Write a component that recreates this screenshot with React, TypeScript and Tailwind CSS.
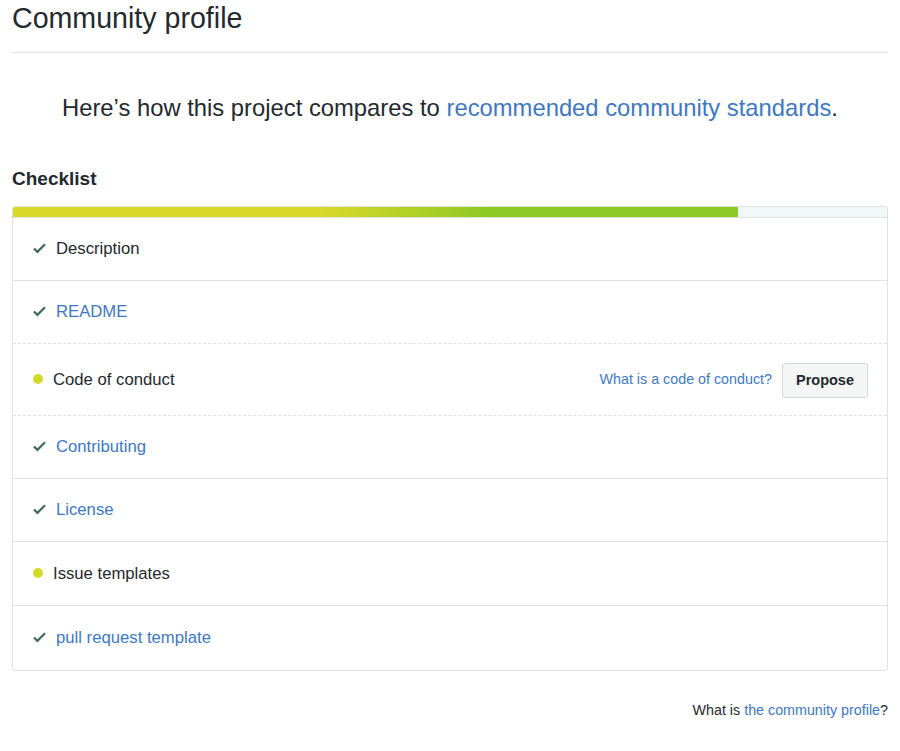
import React from "react";

const Check = () => (
  <svg width="13" height="11" viewBox="0 3 12 10.5" className="shrink-0" aria-hidden>
    <path fillRule="evenodd" d="M12 5l-8 8-4-4 1.5-1.5L4 10l6.5-6.5L12 5z" fill="#426a5a" />
  </svg>
);

const Dot = () => <span className="block w-[10px] h-[10px] rounded-full bg-[#d3d92b] shrink-0" />;

type Row = { label: string; done: boolean; link: boolean; h: string; border: string; extra?: boolean };

const rows: Row[] = [
  { label: "Description", done: true, link: false, h: "h-[63px]", border: "border-solid" },
  { label: "README", done: true, link: true, h: "h-[63px]", border: "border-dashed" },
  { label: "Code of conduct", done: false, link: false, h: "h-[72px]", border: "border-dashed", extra: true },
  { label: "Contributing", done: true, link: true, h: "h-[63px]", border: "border-solid" },
  { label: "License", done: true, link: true, h: "h-[63px]", border: "border-solid" },
  { label: "Issue templates", done: false, link: false, h: "h-[64px]", border: "border-solid" },
  { label: "pull request template", done: true, link: true, h: "h-[64px]", border: "border-solid" },
];

export default function App() {
  return (
    <div className="w-[900px] h-[751px] bg-white px-3 text-[#24292e]" style={{ fontFamily: '"Liberation Sans", Arial, sans-serif' }}>
      <h1 className="text-[28.6px] leading-[36px] pt-0 pb-[16px] border-b border-[#e1e1dc] font-normal">Community profile</h1>
      <p className="text-center text-[23.8px] leading-[30px] mt-[40px]">
        Here’s how this project compares to <span className="text-[#4078c0]">recommended community standards</span>.
      </p>
      <h2 className="text-[19px] font-bold leading-[24px] mt-[44px]">Checklist</h2>
      <div className="mt-[15px] border border-[#dfe2de] rounded-[3px] overflow-hidden">
        <div className="h-[11px] bg-[#f2f7f7] border-b border-[#dfe2de]">
          <div
            className="h-full w-[725px]"
            style={{ background: "linear-gradient(to right, #dbd928 0%, #dbd928 42%, #8cc925 66%, #8cc925 100%)" }}
          />
        </div>
        {rows.map((r, i) => (
          <div
            key={r.label}
            className={`flex items-center pl-[20px] pr-[19px] ${r.h} ${i < rows.length - 1 ? "border-b border-[#e1e1dc] " + r.border : ""}`}
          >
            {r.done ? (
              <span className="flex items-center gap-[10px]">
                <Check />
                <span className={`text-[16.7px] ${r.link ? "text-[#4078c0]" : "text-[#24292e]"}`}>{r.label}</span>
              </span>
            ) : (
              <span className="flex items-center gap-[10px]">
                <Dot />
                <span className="text-[16.7px]">{r.label}</span>
              </span>
            )}
            {r.extra && (
              <div className="ml-auto flex items-center gap-[10px]">
                <span className="text-[14.3px] text-[#4078c0]">What is a code of conduct?</span>
                <button className="h-[35px] mt-[2px] px-[13px] text-[14.5px] font-bold text-[#24292e] bg-[#f4f6f6] border border-[#d5d8d5] rounded-[3px]">
                  Propose
                </button>
              </div>
            )}
          </div>
        ))}
      </div>
      <p className="text-right text-[14.3px] mt-[29px]">
        What is <span className="text-[#4078c0]">the community profile</span>?
      </p>
    </div>
  );
}
